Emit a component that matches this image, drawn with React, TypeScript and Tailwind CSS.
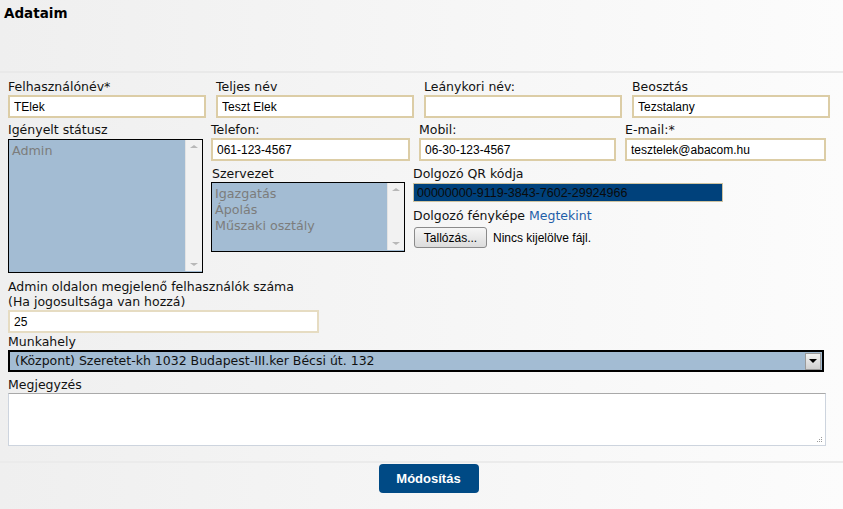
const label = "text-[12.5px] leading-[15px] text-[#111] font-['DejaVu_Sans',Verdana,sans-serif]";
const input =
  "block h-[23px] border-2 border-[#dccda6] bg-white px-[4px] text-[12px] text-black font-['Liberation_Sans',Arial,sans-serif] outline-none";

function Scroll({ h }: { h: number }) {
  return (
    <div className="flex w-[17px] shrink-0 flex-col items-center justify-between border-l border-[#e3e3e3] bg-[#f2f2f2] py-[5px]" style={{ height: h }}>
      <span className="h-0 w-0 border-x-[4px] border-b-[3px] border-x-transparent border-b-[#b8b8b8]" />
      <span className="h-0 w-0 border-x-[4px] border-t-[3px] border-x-transparent border-t-[#b8b8b8]" />
    </div>
  );
}

function ListBox({ items, w, h }: { items: string[]; w: number; h: number }) {
  return (
    <div className="flex border-[1.5px] border-black bg-[#a3bcd3]" style={{ width: w, height: h }}>
      <div className="flex-1 px-[3px] pt-[3px] text-[12.7px] leading-[16px] text-[#7c7c7c] font-['DejaVu_Sans',Verdana,sans-serif]">
        {items.map((i) => (
          <div key={i}>{i}</div>
        ))}
      </div>
      <Scroll h={h - 3} />
    </div>
  );
}

function Field({ name, value, w }: { name: string; value: string; w: number }) {
  return (
    <div style={{ width: w }}>
      <div className={label}>{name}</div>
      <input readOnly value={value} className={`${input} mt-[1px] w-full`} />
    </div>
  );
}

export default function App() {
  return (
    <div className="min-h-[509px] w-[843px] bg-gradient-to-r from-[#efefef] to-[#fcfcfc] font-['DejaVu_Sans',Verdana,sans-serif]">
      <div className="h-[73px] border-b-2 border-[#e9e9e9] pl-[4px] pt-[4px]">
        <h1 className="text-[13.5px] font-bold leading-[18px] text-black">Adataim</h1>
      </div>

      <div className="flex gap-[10px] pl-[8px] pt-[6px]">
        <Field name="Felhasználónév*" value="TElek" w={198} />
        <Field name="Teljes név" value="Teszt Elek" w={198} />
        <Field name="Leánykori név:" value="" w={198} />
        <Field name="Beosztás" value="Tezstalany" w={198} />
      </div>

      <div className="flex pl-[8px] pt-[4px]">
        <div className="w-[203px]">
          <div className={label}>Igényelt státusz</div>
          <div className="mt-[2px]">
            <ListBox items={["Admin"]} w={195} h={134} />
          </div>
        </div>
        <div>
          <div className="flex gap-[9px]">
            <Field name="Telefon:" value="061-123-4567" w={199} />
            <Field name="Mobil:" value="06-30-123-4567" w={197} />
            <Field name="E-mail:*" value="tesztelek@abacom.hu" w={201} />
          </div>
          <div className="mt-[5px] flex">
            <div className="w-[202px]">
              <div className={`${label} pl-[1px]`}>Szervezet</div>
              <div className="mt-[1px]">
                <ListBox items={["Igazgatás", "Ápolás", "Műszaki osztály"]} w={194} h={70} />
              </div>
            </div>
            <div className="w-[320px]">
              <div className={label}>Dolgozó QR kódja</div>
              <input
                readOnly
                value="00000000-9119-3843-7602-29924966"
                className="mt-[2px] block h-[19px] w-[310px] border border-[#cfc3a0] bg-[#00417b] px-[3px] text-[12.5px] text-[#0a0a0a] font-['Liberation_Sans',Arial,sans-serif] outline-none"
              />
              <div className={`${label} mt-[6px]`}>
                Dolgozó fényképe <span className="text-[#1f5ea8]">Megtekint</span>
              </div>
              <div className="mt-[4px] flex items-center gap-[6px] pl-[1px] font-['Liberation_Sans',Arial,sans-serif] text-[12px] text-black">
                <button className="h-[21px] w-[73px] rounded-[3px] border border-[#8a8a8a] bg-gradient-to-b from-[#f6f6f6] to-[#dcdcdc] text-[12px]">
                  Tallózás...
                </button>
                <span>Nincs kijelölve fájl.</span>
              </div>
            </div>
          </div>
        </div>
      </div>

      <div className="pl-[8px] pt-[6px]">
        <div className={label}>
          Admin oldalon megjelenő felhasználók száma
          <br />
          (Ha jogosultsága van hozzá)
        </div>
        <input readOnly value="25" className={`${input} mt-[1px] h-[21px] w-[311px] border border-[#e6dcc2]`} />

        <div className={`${label} mt-[1px]`}>Munkahely</div>
        <div className="mt-[1px] flex h-[22px] w-[816px] items-center border-2 border-black bg-[#a3bcd3] pl-[5px] text-[12.5px] text-[#111]">
          <span className="flex-1">(Központ) Szeretet-kh 1032 Budapest-III.ker Bécsi út. 132</span>
          <span className="mr-[1px] flex h-[17px] w-[16px] items-center justify-center border border-[#9a9a9a] bg-gradient-to-b from-[#f2f2f2] to-[#d0d0d0]">
            <span className="h-0 w-0 border-x-[4px] border-t-[4px] border-x-transparent border-t-black" />
          </span>
        </div>

        <div className={`${label} mt-[5px]`}>Megjegyzés</div>
        <div className="relative mt-[1px] h-[53px] w-[818px] border border-[#cdd4de] border-t-[#a9a9a9] bg-white">
          <div className="absolute bottom-[3px] right-[3px] grid grid-cols-3 gap-[1px]">
            {[0, 0, 1, 0, 1, 1, 1, 1, 1].map((v, i) => (
              <span key={i} className={`h-[1px] w-[1px] ${v ? "bg-[#9a9a9a]" : "bg-transparent"}`} />
            ))}
          </div>
        </div>
      </div>

      <div className="mt-[15px] border-t-2 border-[#ebebeb] pt-[1px]">
        <div className="flex justify-center pl-[14px]">
          <button className="h-[29px] w-[100px] rounded-[4px] bg-[#004a85] text-[13px] font-bold text-white font-['Liberation_Sans',Arial,sans-serif]">
            Módosítás
          </button>
        </div>
      </div>
    </div>
  );
}
